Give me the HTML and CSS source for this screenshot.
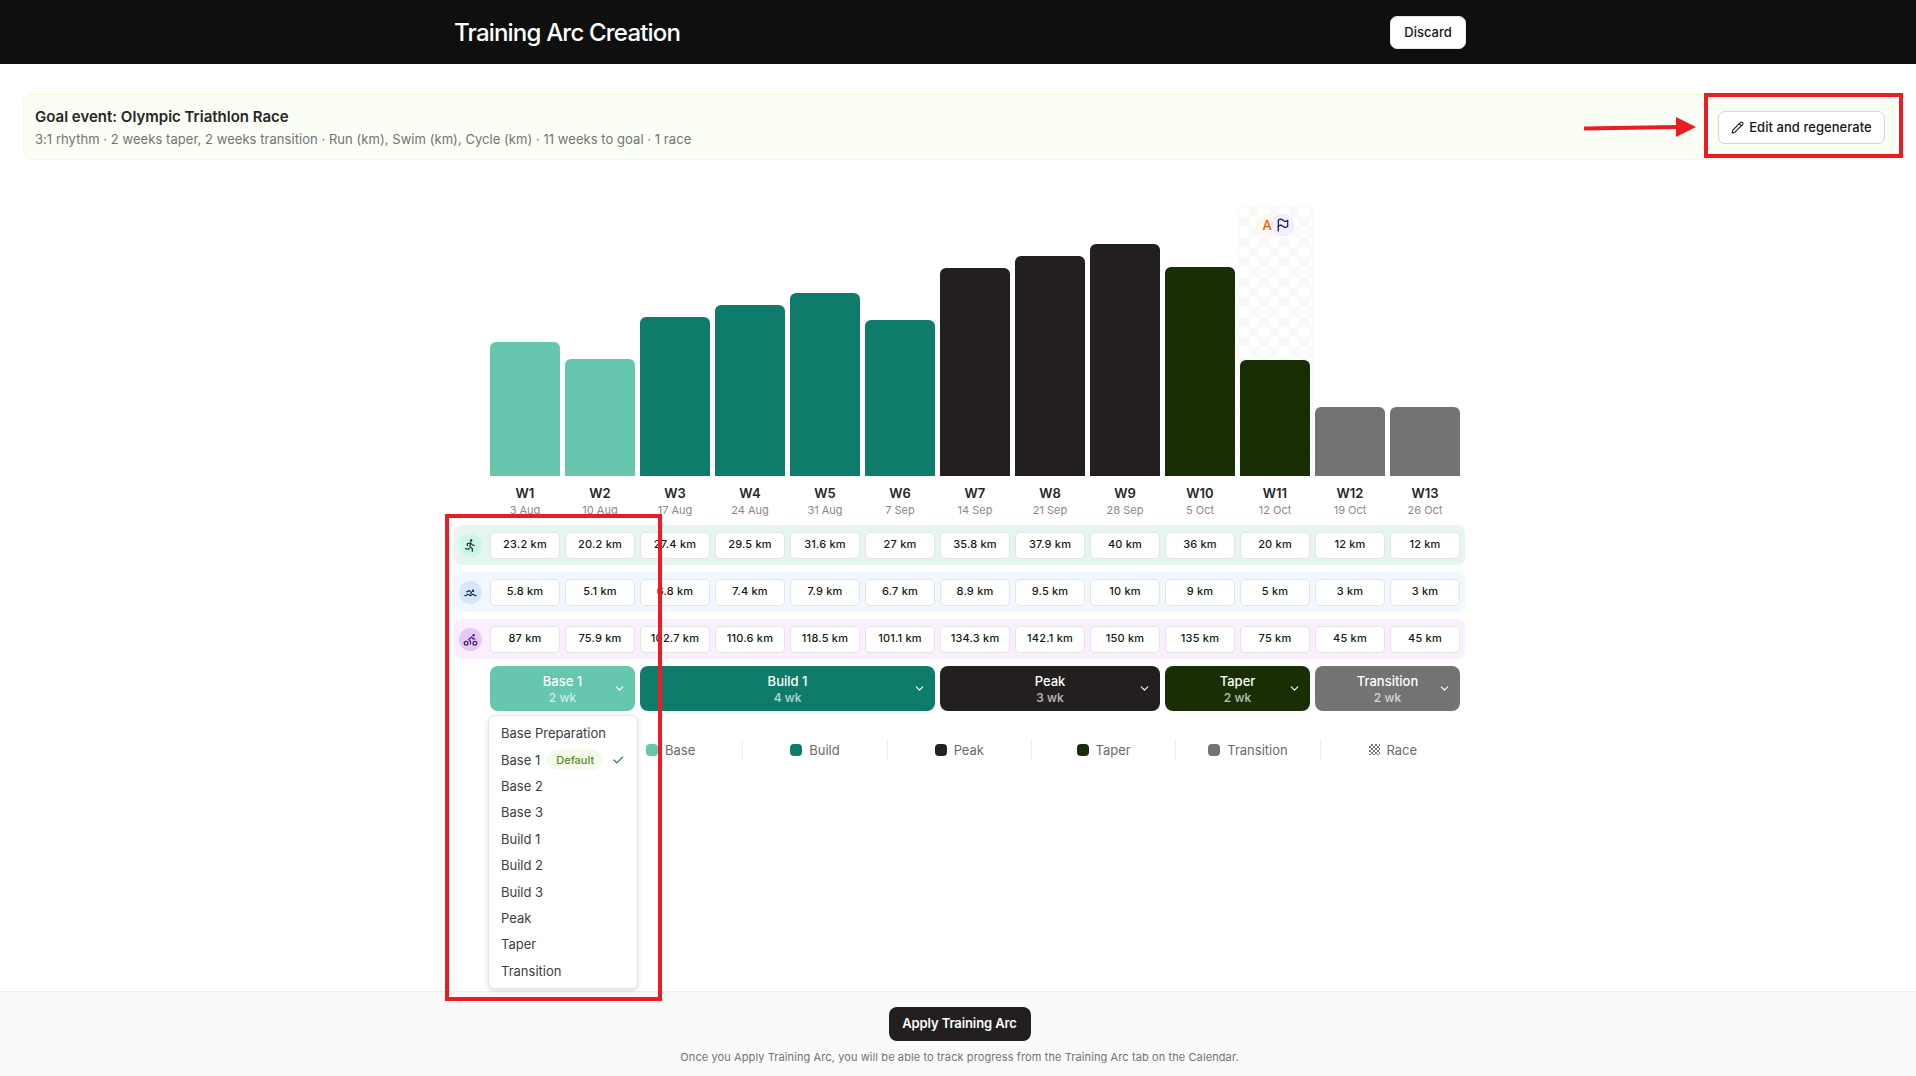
FILE: index.html
```html
<!DOCTYPE html>
<html lang="en">
<head>
  <meta charset="UTF-8" />
  <meta name="viewport" content="width=device-width, initial-scale=1.0"/>
  <title>Training Arc Creation</title>
  <link rel="stylesheet" href="styles.css">
</head>
<body>
  <header class="topbar">
    <h1>Training Arc Creation</h1>
    <button class="discard-btn">Discard</button>
  </header>

  <main class="page">
    <section class="goal-banner">
      <div>
        <div class="goal-title">Goal event: Olympic Triathlon Race</div>
        <div class="goal-meta">3:1 rhythm · 2 weeks taper, 2 weeks transition · Run (km), Swim (km), Cycle (km) · 11 weeks to goal · 1 race</div>
      </div>
      <button class="edit-btn">
        <svg class="edit-icon" viewBox="0 0 24 24"><path d="M21.174 6.812a1 1 0 0 0-3.986-3.987L3.842 16.174a2 2 0 0 0-.5.83l-1.321 4.352a.5.5 0 0 0 .623.622l4.353-1.32a2 2 0 0 0 .83-.497z"/><path d="m15 5 4 4"/></svg>
        Edit and regenerate
      </button>
    </section>

    <section class="arc">
      <div class="week-grid chart">
        <div class="bar-col"><div class="bar base" style="height:134px"></div></div>
        <div class="bar-col"><div class="bar base" style="height:117px"></div></div>
        <div class="bar-col"><div class="bar build" style="height:159px"></div></div>
        <div class="bar-col"><div class="bar build" style="height:171px"></div></div>
        <div class="bar-col"><div class="bar build" style="height:183px"></div></div>
        <div class="bar-col"><div class="bar build" style="height:156px"></div></div>
        <div class="bar-col"><div class="bar peak" style="height:208px"></div></div>
        <div class="bar-col"><div class="bar peak" style="height:220px"></div></div>
        <div class="bar-col"><div class="bar peak" style="height:232px"></div></div>
        <div class="bar-col"><div class="bar taper" style="height:209px"></div></div>
        <div class="bar-col race-col">
          <div class="race-bg"></div>
          <div class="race-badges">
            <span class="badge-a">A</span>
            <span class="badge-flag">
              <svg viewBox="0 0 24 24"><path d="M5 5a5 5 0 0 1 7 0a5 5 0 0 0 7 0v9a5 5 0 0 1 -7 0a5 5 0 0 0 -7 0v-9z"/><path d="M5 21v-7"/></svg>
            </span>
          </div>
          <div class="bar taper" style="height:116px"></div>
        </div>
        <div class="bar-col"><div class="bar transition" style="height:69px"></div></div>
        <div class="bar-col"><div class="bar transition" style="height:69px"></div></div>
      </div>

      <div class="week-grid week-labels">
        <div class="week"><b>W1</b><span>3 Aug</span></div>
        <div class="week"><b>W2</b><span>10 Aug</span></div>
        <div class="week"><b>W3</b><span>17 Aug</span></div>
        <div class="week"><b>W4</b><span>24 Aug</span></div>
        <div class="week"><b>W5</b><span>31 Aug</span></div>
        <div class="week"><b>W6</b><span>7 Sep</span></div>
        <div class="week"><b>W7</b><span>14 Sep</span></div>
        <div class="week"><b>W8</b><span>21 Sep</span></div>
        <div class="week"><b>W9</b><span>28 Sep</span></div>
        <div class="week"><b>W10</b><span>5 Oct</span></div>
        <div class="week"><b>W11</b><span>12 Oct</span></div>
        <div class="week"><b>W12</b><span>19 Oct</span></div>
        <div class="week"><b>W13</b><span>26 Oct</span></div>
      </div>

      <div class="metric-row run">
        <span class="sport-icon">
          <svg viewBox="0 0 24 24"><circle cx="13" cy="4" r="1"/><path d="M4 17l5 1l.75 -1.5"/><path d="M15 21l0 -4l-4 -3l1 -6"/><path d="M7 12l0 -3l5 -1l3 3l3 1"/></svg>
        </span>
        <div class="week-grid">
          <div class="cell">23.2 km</div><div class="cell">20.2 km</div><div class="cell">27.4 km</div><div class="cell">29.5 km</div><div class="cell">31.6 km</div><div class="cell">27 km</div><div class="cell">35.8 km</div><div class="cell">37.9 km</div><div class="cell">40 km</div><div class="cell">36 km</div><div class="cell">20 km</div><div class="cell">12 km</div><div class="cell">12 km</div>
        </div>
      </div>

      <div class="metric-row swim">
        <span class="sport-icon">
          <svg viewBox="0 0 24 24"><circle cx="16" cy="9" r="1"/><path d="M6 11l4 -2l3.5 3l-1.5 2"/><path d="M3 16.75a2.4 2.4 0 0 0 1 .25a2.4 2.4 0 0 0 2 -1a2.4 2.4 0 0 1 2 -1a2.4 2.4 0 0 1 2 1a2.4 2.4 0 0 0 2 1a2.4 2.4 0 0 0 2 -1a2.4 2.4 0 0 1 2 -1a2.4 2.4 0 0 1 2 1a2.4 2.4 0 0 0 2 1a2.4 2.4 0 0 0 1 -.25"/></svg>
        </span>
        <div class="week-grid">
          <div class="cell">5.8 km</div><div class="cell">5.1 km</div><div class="cell">6.8 km</div><div class="cell">7.4 km</div><div class="cell">7.9 km</div><div class="cell">6.7 km</div><div class="cell">8.9 km</div><div class="cell">9.5 km</div><div class="cell">10 km</div><div class="cell">9 km</div><div class="cell">5 km</div><div class="cell">3 km</div><div class="cell">3 km</div>
        </div>
      </div>

      <div class="metric-row cycle">
        <span class="sport-icon">
          <svg viewBox="0 0 24 24"><circle cx="5" cy="18" r="3"/><circle cx="19" cy="18" r="3"/><circle cx="17" cy="5" r="1"/><path d="M12 19l0 -4l-3 -3l5 -4l2 3l3 0"/></svg>
        </span>
        <div class="week-grid">
          <div class="cell">87 km</div><div class="cell">75.9 km</div><div class="cell">102.7 km</div><div class="cell">110.6 km</div><div class="cell">118.5 km</div><div class="cell">101.1 km</div><div class="cell">134.3 km</div><div class="cell">142.1 km</div><div class="cell">150 km</div><div class="cell">135 km</div><div class="cell">75 km</div><div class="cell">45 km</div><div class="cell">45 km</div>
        </div>
      </div>

      <div class="week-grid phases">
        <button class="phase base span-2">
          <span class="phase-name">Base 1</span><span class="phase-len">2 wk</span>
          <svg class="chevron" viewBox="0 0 24 24"><path d="M6 9l6 6l6 -6"/></svg>
        </button>
        <button class="phase build span-4">
          <span class="phase-name">Build 1</span><span class="phase-len">4 wk</span>
          <svg class="chevron" viewBox="0 0 24 24"><path d="M6 9l6 6l6 -6"/></svg>
        </button>
        <button class="phase peak span-3">
          <span class="phase-name">Peak</span><span class="phase-len">3 wk</span>
          <svg class="chevron" viewBox="0 0 24 24"><path d="M6 9l6 6l6 -6"/></svg>
        </button>
        <button class="phase taper span-2">
          <span class="phase-name">Taper</span><span class="phase-len">2 wk</span>
          <svg class="chevron" viewBox="0 0 24 24"><path d="M6 9l6 6l6 -6"/></svg>
        </button>
        <button class="phase transition span-2">
          <span class="phase-name">Transition</span><span class="phase-len">2 wk</span>
          <svg class="chevron" viewBox="0 0 24 24"><path d="M6 9l6 6l6 -6"/></svg>
        </button>

        <ul class="phase-menu">
          <li>Base Preparation</li>
          <li>Base 1 <span class="default-tag">Default</span>
            <svg class="check" viewBox="0 0 24 24"><path d="M5 12l5 5l10 -10"/></svg>
          </li>
          <li>Base 2</li>
          <li>Base 3</li>
          <li>Build 1</li>
          <li>Build 2</li>
          <li>Build 3</li>
          <li>Peak</li>
          <li>Taper</li>
          <li>Transition</li>
        </ul>
      </div>

      <div class="legend">
        <div class="legend-item"><i class="dot base"></i>Base</div>
        <div class="legend-item"><i class="dot build"></i>Build</div>
        <div class="legend-item"><i class="dot peak"></i>Peak</div>
        <div class="legend-item"><i class="dot taper"></i>Taper</div>
        <div class="legend-item"><i class="dot transition"></i>Transition</div>
        <div class="legend-item"><i class="dot race"></i>Race</div>
      </div>
    </section>
  </main>

  <footer class="apply-bar">
    <button class="apply-btn">Apply Training Arc</button>
    <p>Once you Apply Training Arc, you will be able to track progress from the Training Arc tab on the Calendar.</p>
  </footer>

  <!-- red annotations drawn on top of the screenshot -->
  <div class="mark mark-edit"></div>
  <div class="mark mark-menu"></div>
  <svg class="mark-arrow" viewBox="0 0 112 20"><path d="M0 9.5L92 8V0L112 10L92 20V12L0 13.5z"/></svg>
</body>
</html>
```

FILE: styles.css
```css
* {
  box-sizing: border-box;
}
body {
  font-family: Inter, "Noto Sans", sans-serif;
  background: #fff;
  color: #171717;
  margin: 0;
  height: 100vh;
  display: flex;
  flex-direction: column;
  overflow: hidden;
  position: relative;
}
button {
  font-family: inherit;
}
svg {
  fill: none;
  stroke: currentColor;
  stroke-width: 2;
  stroke-linecap: round;
  stroke-linejoin: round;
}

/* header */
.topbar {
  height: 64px;
  flex: none;
  background: #0f0f0f;
  display: flex;
  align-items: center;
  justify-content: space-between;
  padding: 0 450px 0 454px;
}
.topbar h1 {
  margin: 0;
  color: #fff;
  font-size: 24px;
  font-weight: 500;
  letter-spacing: -0.8px;
}
.discard-btn {
  width: 76px;
  height: 33px;
  background: #fff;
  border: 1px solid #e5e5e5;
  border-radius: 7px;
  color: #171717;
  font-size: 13px;
  font-weight: 500;
  padding: 0;
}

/* goal banner */
.page {
  flex: 1;
  padding: 30px 23px 0;
}
.goal-banner {
  height: 66px;
  background: #fbfef5;
  border: 1px solid #eefbd8;
  border-radius: 10px;
  display: flex;
  align-items: center;
  justify-content: space-between;
  padding: 0 7px 0 11px;
}
.goal-title {
  font-size: 15px;
  font-weight: 600;
  color: #262626;
  line-height: 20px;
  margin-bottom: 3px;
}
.goal-meta {
  font-size: 13px;
  letter-spacing: 0.05px;
  color: #737373;
  line-height: 18px;
}
.edit-btn {
  width: 167px;
  height: 33px;
  background: #fff;
  border: 1px solid #d4d4d4;
  border-radius: 7px;
  color: #171717;
  font-size: 13px;
  font-weight: 500;
  letter-spacing: 0.05px;
  display: flex;
  align-items: center;
  justify-content: center;
  gap: 5px;
  padding: 0;
}
.edit-icon {
  width: 13px;
  height: 13px;
}

/* weekly chart */
.arc {
  width: 1011px;
  margin: 46px 0 0 431px;
}
.week-grid {
  display: grid;
  grid-template-columns: repeat(13, 70px);
  column-gap: 5px;
}
.chart,
.week-labels,
.phases {
  margin-left: 36px;
}
.chart {
  height: 270px;
}
.bar-col {
  position: relative;
  display: flex;
  align-items: flex-end;
}
.bar {
  width: 100%;
  position: relative;
  border-radius: 6px 6px 0 0;
}
.base {
  background: #66c6ae;
}
.build {
  background: #0f7c6b;
}
.peak {
  background: #231f20;
}
.taper {
  background: #1a2e05;
}
.transition {
  background: #737373;
}
.race-bg {
  position: absolute;
  top: 0;
  bottom: 0;
  left: -2px;
  right: -3px;
  border: 1px solid #f8f8f8;
  border-bottom: 0;
  border-radius: 6px 6px 0 0;
  background: repeating-conic-gradient(#f9f9f9 0 25%, #fff 0 50%) 0 0 / 20px 20px;
}
.race-badges {
  position: absolute;
  top: 8px;
  left: 16px;
  display: flex;
}
.badge-a,
.badge-flag {
  width: 22px;
  height: 22px;
  border-radius: 50%;
  display: flex;
  align-items: center;
  justify-content: center;
}
.badge-a {
  background: #fff7ed;
  color: #ea580c;
  font-size: 13px;
  font-weight: 500;
}
.badge-flag {
  background: #f3f0fd;
  border: 1px solid #ebe7fb;
  color: #2e1a7a;
  margin-left: -6px;
  position: relative;
}
.badge-flag svg {
  width: 16px;
  height: 16px;
}

.week-labels {
  height: 49px;
  padding-top: 9px;
}
.week {
  text-align: center;
}
.week b {
  display: block;
  font-size: 13px;
  font-weight: 600;
  line-height: 16px;
  color: #262626;
}
.week span {
  display: block;
  margin-top: 1px;
  font-size: 11px;
  line-height: 17px;
  color: #8a8a8a;
}

/* km rows */
.metric-row {
  height: 40px;
  border-radius: 8px;
  display: flex;
  align-items: center;
  padding-left: 5px;
  gap: 8px;
  margin-bottom: 7px;
}
.run {
  background: #e6f5f1;
}
.swim {
  background: #f0f7ff;
}
.cycle {
  background: #faeeff;
}
.sport-icon {
  width: 23px;
  height: 23px;
  border-radius: 50%;
  display: flex;
  align-items: center;
  justify-content: center;
}
.sport-icon svg {
  width: 15px;
  height: 15px;
}
.run .sport-icon {
  background: #cdf5ea;
  color: #0d3b30;
}
.swim .sport-icon {
  background: #d7e7fc;
  color: #1c2a5c;
}
.cycle .sport-icon {
  background: #e8c9f5;
  color: #3f1a78;
}
.cell {
  height: 27px;
  background: #fff;
  border: 1px solid #e5e5e5;
  border-radius: 5px;
  display: flex;
  align-items: center;
  justify-content: center;
  padding-bottom: 2px;
  font-size: 11px;
  font-weight: 500;
  letter-spacing: 0.2px;
  color: #171717;
}

/* phase buttons */
.phases {
  position: relative;
}
.phase {
  height: 45px;
  border: 0;
  border-radius: 8px;
  color: #fff;
  padding: 2px 0 0;
  position: relative;
  display: flex;
  flex-direction: column;
  align-items: center;
  justify-content: center;
}
.span-2 {
  grid-column: span 2;
}
.span-3 {
  grid-column: span 3;
}
.span-4 {
  grid-column: span 4;
}
.phase-name {
  font-size: 13px;
  font-weight: 500;
  line-height: 17px;
}
.phase-len {
  font-size: 12px;
  font-weight: 500;
  line-height: 16px;
  opacity: 0.7;
}
.chevron {
  position: absolute;
  right: 9px;
  top: 16px;
  width: 13px;
  height: 13px;
}
.phase-menu {
  position: absolute;
  top: 49px;
  left: -2px;
  width: 150px;
  margin: 0;
  padding: 4px 0;
  list-style: none;
  background: #fff;
  border: 1px solid #e5e5e5;
  border-radius: 6px;
  box-shadow: 0 2px 5px rgba(0,0,0,0.12);
  font-size: 13px;
  color: #404040;
  z-index: 2;
}
.phase-menu li {
  height: 26.4px;
  padding-left: 12px;
  display: flex;
  align-items: center;
  gap: 7px;
  white-space: nowrap;
}
.default-tag {
  height: 21px;
  width: 56px;
  border-radius: 11px;
  background: #f4fbe8;
  color: #5e8a2c;
  font-size: 11px;
  font-weight: 500;
  display: flex;
  align-items: center;
  justify-content: center;
}
.check {
  width: 14px;
  height: 14px;
  margin-left: 1px;
  color: #16803c;
}

/* legend */
.legend {
  display: flex;
  margin: 29px 0 0 145px;
}
.legend-item {
  width: 145px;
  height: 19px;
  border-right: 1px solid #eeeeee;
  display: flex;
  align-items: center;
  justify-content: center;
  gap: 7px;
  font-size: 13px;
  color: #6b6b6b;
}
.legend-item:last-child {
  border-right: 0;
}
.dot {
  width: 12px;
  height: 12px;
  border-radius: 4px;
}
.dot.race {
  width: 11px;
  height: 11px;
  border-radius: 0;
  background: repeating-conic-gradient(#777 0 25%, #fff 0 50%) 0 0 / 4px 4px;
}

/* bottom bar */
.apply-bar {
  height: 85px;
  flex: none;
  background: #fafafa;
  border-top: 1px solid #eeeeee;
  display: flex;
  flex-direction: column;
  align-items: center;
  padding: 15px 0 0 3px;
}
.apply-btn {
  width: 142px;
  height: 34px;
  background: #231f20;
  border: 0;
  border-radius: 8px;
  color: #fff;
  font-size: 13px;
  font-weight: 600;
  letter-spacing: -0.1px;
  padding: 0 0 2px;
}
.apply-bar p {
  margin: 8px 0 0;
  font-size: 11px;
  letter-spacing: 0.1px;
  line-height: 16px;
  color: #737373;
}

/* annotations */
.mark {
  position: absolute;
  border: 4px solid #ed1c24;
  z-index: 5;
}
.mark-edit {
  left: 1704px;
  top: 93px;
  width: 199px;
  height: 65px;
}
.mark-menu {
  left: 445px;
  top: 514px;
  width: 217px;
  height: 487px;
}
.mark-arrow {
  position: absolute;
  left: 1584px;
  top: 117px;
  width: 112px;
  height: 20px;
  z-index: 5;
}
.mark-arrow path {
  fill: #ed1c24;
  stroke: none;
}
```
